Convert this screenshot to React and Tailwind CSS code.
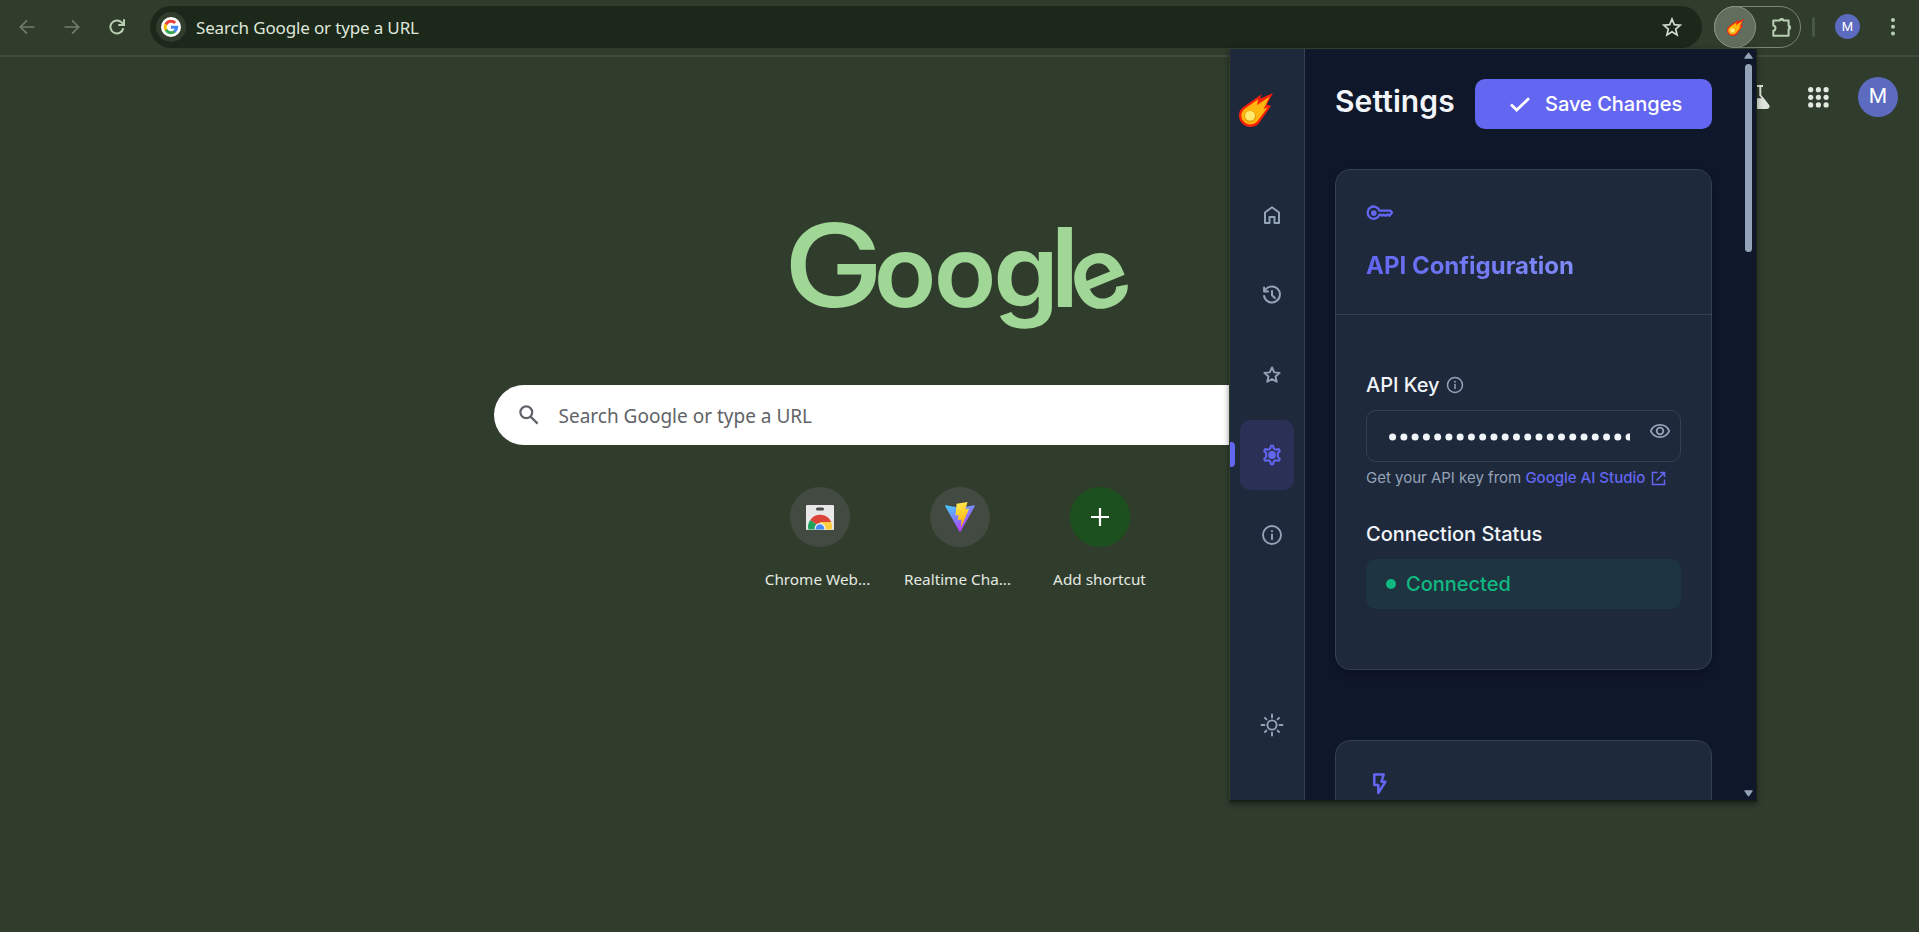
import React from "react";

const uiFont = "font-['Noto_Sans',sans-serif]";

function Stroke({ size = 24, w = 2, className = "", children }) {
  return (
    <svg width={size} height={size} viewBox="0 0 24 24" fill="none" stroke="currentColor" strokeWidth={w} strokeLinecap="round" strokeLinejoin="round" className={`shrink-0 ${className}`}>
      {children}
    </svg>
  );
}

function Comet({ size }) {
  return (
    <svg width={size} height={size} viewBox="0 0 34 34" className="shrink-0">
      <path d="M34 0 27.700 11.600 32 13 21.500 28A11.500 11.500 0 0 1 11.300 33.900 11.300 11.300 0 0 1 0 22.500Q0 17 4.700 13.800L22.700 1.300 21 5.700Z" fill="#f8210a" />
      <path d="M30.500 3.800 22.200 9.300 18 12.300 19.200 6.300 5.900 15.800A9 9 0 0 0 2.300 22.500 9 9 0 0 0 11.300 31.500Q17 31.300 20 26L28.600 14.600 24.500 16.200Z" fill="#ffb70f" />
      <circle cx="11.200" cy="23.500" r="6" fill="#e6a40c" />
      <circle cx="11" cy="22.800" r="4.900" fill="#ffe96e" />
    </svg>
  );
}

function GoogleMark() {
  return (
    <svg width="20" height="20" viewBox="0 0 20 20">
      <circle cx="10" cy="10" r="10" fill="#fff" />
      <g fill="none" strokeWidth="3">
        <path d="M4.850 7.500A5.700 5.700 0 0 1 14.200 6.100" stroke="#ea4335" />
        <path d="M5.100 13A5.700 5.700 0 0 1 4.900 7.200" stroke="#fbbc05" />
        <path d="M13.700 14.400A5.700 5.700 0 0 1 5 12.800" stroke="#34a853" />
        <path d="M10 10.200h5.700a5.700 5.700 0 0 1-2.200 4.300" stroke="#4285f4" />
      </g>
    </svg>
  );
}

function Toolbar() {
  return (
    <header className="flex h-[57px] items-start border-b-2 border-[#434b41] bg-[#303d2d] pt-[6px]">
      <div className="flex h-[42px] w-[150px] items-center gap-[29px] pl-[19px]">
        <svg width="16" height="16" viewBox="0 0 16 16" fill="none" stroke="#6f7c6b" strokeWidth="1.700">
          <path d="M15.500 8H1.500M8 1.300 1.300 8 8 14.700" />
        </svg>
        <svg width="16" height="16" viewBox="0 0 16 16" fill="none" stroke="#6f7c6b" strokeWidth="1.700">
          <path d="M.5 8h14M8 1.300 14.700 8 8 14.700" />
        </svg>
        <svg width="16" height="16" viewBox="0 0 16 16" fill="none" stroke="#b7cfb2" strokeWidth="2">
          <path d="M14.300 9.200A6.500 6.500 0 1 1 12.600 3.400L14.500 5.300M15 .3V6H9.300" />
        </svg>
      </div>
      <div className="flex h-[42px] w-[1552px] items-center rounded-full bg-[#1c281a] pl-[6px] pr-[20px]">
        <div className="flex size-[30px] items-center justify-center rounded-full bg-[#303d2d]">
          <GoogleMark />
        </div>
        <span className={`ml-[10px] mt-px grow text-[17px] tracking-[-0.15px] text-[#dfe6db] ${uiFont}`}>Search Google or type a URL</span>
        <svg width="20" height="20" viewBox="0 0 20 20" fill="none" stroke="#d3dacf" strokeWidth="1.700">
          <path d="m10 2 2.300 5.600 6 .5-4.600 3.900 1.400 5.900L10 14.700l-5.100 3.200L6.300 12 1.700 8.100l6-.5Z" />
        </svg>
      </div>
      <div className="ml-[12px] flex h-[42px] w-[87px] items-center rounded-full border border-[#7b8577]">
        <div className="-ml-px flex size-[42px] shrink-0 items-center justify-center rounded-full border border-[#8a9486] bg-[#616e5d]">
          <Comet size={17} />
        </div>
        <svg width="22" height="22" viewBox="0 0 22 22" className="ml-[15px] shrink-0" fill="none" stroke="#b7cfb2" strokeWidth="2" strokeLinejoin="round">
          <path d="M2.300 4.400h6.500a1.900 1.900 0 0 1 3.600 0h5.200v5.300a1.900 1.900 0 0 1 0 3.700v6.300H2.300v-4.900a2.700 2.700 0 0 0 0-5.300Z" />
          <path d="M9 4a1.700 1.700 0 0 1 3.300 0ZM18 10a1.700 1.700 0 0 1 0 3.200Z" fill="#b7cfb2" strokeWidth="1.500" />
        </svg>
      </div>
      <div className="ml-[11px] mt-[11px] h-[20px] w-[3px] rounded-full bg-[#465843]" />
      <div className="ml-[20px] mt-[8px] flex size-[25px] items-center justify-center rounded-full bg-[#5c6bc0] font-[Roboto] text-[13px] text-white">M</div>
      <svg width="6" height="20" viewBox="0 0 6 20" className="ml-[30px] mt-[11px]" fill="#b7cfb2">
        <circle cx="3" cy="3" r="2" />
        <circle cx="3" cy="9.800" r="2" />
        <circle cx="3" cy="16.500" r="2" />
      </svg>
    </header>
  );
}

const dots = [0, 1, 2, 3, 4, 5, 6, 7, 8];

function AccountRow() {
  return (
    <div className="flex h-[80px] items-center justify-end pr-[21px]">
      <svg width="26" height="24" viewBox="0 0 26 24" fill="#dfe5dc">
        <path d="M7 0h12v2h-1.700v8l7.900 10Q26.500 24 23 24H3Q-.5 24 .8 20L8.700 10V2H7ZM10.700 2v8.500L8.300 13.300h9.400L15.300 10.500V2Z" fillRule="evenodd" />
      </svg>
      <svg width="21" height="21" viewBox="0 0 21 21" className="ml-[38px]" fill="#e3e8e0">
        {dots.map((i) => (
          <circle key={i} cx={2.700 + (i % 3) * 7.700} cy={2.700 + Math.floor(i / 3) * 7.600} r="2.600" />
        ))}
      </svg>
      <div className="ml-[29px] flex size-[40px] items-center justify-center rounded-full bg-[#5c6bc0] font-[Roboto] text-[21px] text-white">M</div>
    </div>
  );
}

function Shortcut({ label, tone, pad = "", children }) {
  return (
    <div className="flex w-[140px] flex-col items-center">
      <div className={`flex size-[60px] items-center justify-center rounded-full ${tone}`}>{children}</div>
      <span className={`mt-[20px] whitespace-nowrap text-[15.300px] leading-[24px] text-[#e4e9e1] ${pad} ${uiFont}`}>{label}</span>
    </div>
  );
}

function NewTab() {
  return (
    <main className="flex flex-col items-center">
      <svg width="380" height="190" viewBox="0 0 380 190" className="mt-[25px]" fontFamily="Inter" fill="#a0d797">
        <text transform="translate(13.500 145) scale(1.165 1)" fontSize="115" fontWeight="500">G</text>
        <text transform="translate(0 145) scale(1.040 1)" fontSize="99" fontWeight="600">
          <tspan x="99.800">o</tspan>
          <tspan x="157.500">o</tspan>
          <tspan x="214.700" fontSize="101">g</tspan>
        </text>
        <text y="145" fontSize="110" fontWeight="600">
          <tspan x="280.500">l</tspan>
          <tspan x="313" y="155" rotate="-22" fontSize="99">e</tspan>
        </text>
      </svg>
      <div className="mt-[33px] flex h-[60px] w-[932px] items-center rounded-full bg-white pl-[25px]">
        <svg width="20" height="20" viewBox="0 0 20 20" fill="none" stroke="#5f6368" strokeWidth="2.200">
          <circle cx="7.300" cy="7.300" r="5.900" />
          <path d="m11.600 11.600 7 7" />
        </svg>
        <span className={`ml-[20px] mt-[2px] text-[19px] text-[#5f6368] ${uiFont}`}>Search Google or type a URL</span>
      </div>
      <div className="mt-[42px] flex">
        <Shortcut label="Chrome Web..." tone="bg-[#434a41]" pad="pr-[4px]">
          <svg width="28" height="25" viewBox="0 0 28 25">
            <rect width="28" height="25" rx="1" fill="#e8e8e8" />
            <rect x="10" y="2.500" width="8" height="3" rx="1.500" fill="#4a4a4a" />
            <path d="M14 22 4.300 15A12 12 0 0 1 25.200 17H14Z" fill="#db4437" />
            <path d="M14 22 4.300 15A12 12 0 0 0 2.300 24.500H12Z" fill="#1fa05c" />
            <path d="M14 17h11.200a12 12 0 0 1 .6 7.500H14Z" fill="#ffcd40" />
            <path d="M8.600 24.500a5.500 5.500 0 1 1 10.800 0Z" fill="#eef2f8" />
            <path d="M9.800 24.500a4.300 4.300 0 1 1 8.400 0Z" fill="#4587f3" />
          </svg>
        </Shortcut>
        <Shortcut label="Realtime Cha..." tone="bg-[#434a41]" pad="pr-[4px]">
          <svg width="30" height="30" viewBox="0 0 30 30">
            <defs>
              <linearGradient id="vBody" x1="0" y1="0" x2=".6" y2="1">
                <stop offset="0" stopColor="#41d1ff" />
                <stop offset="1" stopColor="#bd34fe" />
              </linearGradient>
              <linearGradient id="vBolt" x1=".4" y1="0" x2=".6" y2="1">
                <stop offset="0" stopColor="#ffea4f" />
                <stop offset="1" stopColor="#ffa800" />
              </linearGradient>
            </defs>
            <path d="M.6 3.200 15 5.700 29.400 3.200Q30.200 3.400 29.800 4.200L15.600 29.500Q15 30.200 14.400 29.500L.2 4.200Q0 3.300.6 3.200Z" fill="url(#vBody)" />
            <path d="m11.600 1.800 11-1.800-2.300 7.200 3.900-.6L16 25.500l.5-8-3.700.8.8-5.300-3 .6Z" fill="url(#vBolt)" />
          </svg>
        </Shortcut>
        <Shortcut label="Add shortcut" tone="bg-[#1c501e]">
          <svg width="18" height="18" viewBox="0 0 18 18" stroke="#fff" strokeWidth="2.200">
            <path d="M9 0v18M0 9h18" />
          </svg>
        </Shortcut>
      </div>
    </main>
  );
}

function NavItem({ active, children }) {
  return (
    <div className={`flex h-[70px] w-[54px] items-center justify-center rounded-[10px] pl-[10px] ${active ? "bg-[#2a3056] text-[#6366f1]" : "text-[#94a3b8]"}`}>
      {children}
    </div>
  );
}

function Sidebar() {
  return (
    <aside className="relative flex h-full w-[75px] flex-col border-r border-[#334155] bg-[#1e293b] pl-[10px]">
      <div className="absolute left-0 top-[393px] h-[25px] w-[5px] rounded-r-[4px] bg-[#6366f1]" />
      <div className="mt-[44px] h-[34px] -ml-px">
        <Comet size={34} />
      </div>
      <nav className="mt-[52.500px] flex flex-col gap-[10px]">
        <NavItem>
          <Stroke w={2}><path d="M5 20V9.500L12 4.200l7 5.300V20h-4.500v-6h-5v6Z" /></Stroke>
        </NavItem>
        <NavItem>
          <Stroke w={2}><path d="M4.100 4.500v4h4M4.600 8.200A8 8 0 1 1 4.050 13M12 8v4.200l2.800 2.800" /></Stroke>
        </NavItem>
        <NavItem>
          <Stroke w={1.900}><path d="m12 4.400 2.200 5 5.400.5-4.100 3.600 1.200 5.300L12 16l-4.700 2.800 1.200-5.300-4.100-3.600 5.400-.5Z" /></Stroke>
        </NavItem>
        <NavItem active>
          <Stroke w={2}>
            <path d="M10.300 5.500 10.900 2.800h2.200l.6 2.700 2.300 1.300 2.700-.8 1.200 2-2 2v3.900l2 2-1.200 2-2.700-.8-2.300 1.300-.6 2.800h-2.200l-.6-2.800L8 17.100l-2.700.8-1.200-2 2-2V10l-2-2 1.200-2 2.700.8Z" />
            <circle cx="12" cy="12" r="2.900" fill="currentColor" />
          </Stroke>
        </NavItem>
        <NavItem>
          <Stroke w={1.900}><circle cx="12" cy="12" r="9" /><path d="M12 11.500v4.700" /><path d="M12 8v.1" strokeWidth="2.200" /></Stroke>
        </NavItem>
      </nav>
      <div className="mt-[120px]">
        <NavItem>
          <Stroke w={1.900}>
            <circle cx="12" cy="12" r="4.600" />
            <path d="M12 1.500v3M12 19.500v3M1.500 12h3M19.500 12h3M5 5l1.400 1.400M17.600 17.600 19 19M5 19l1.400-1.400M17.600 6.400 19 5" />
          </Stroke>
        </NavItem>
      </div>
    </aside>
  );
}

function ApiCard() {
  return (
    <section className="h-[501px] w-[377px] shrink-0 rounded-[15px] border border-[#334155] bg-[#1e293b] shadow-[0_4px_8px_rgba(0,0,0,0.25)]">
      <div className="flex h-[145px] flex-col items-start border-b border-[#334155] px-[30px] pt-[29px]">
        <svg width="28" height="28" viewBox="0 0 28 28" fill="none" stroke="#6366f1" strokeWidth="2.300" strokeLinejoin="round" strokeLinecap="round">
          <path d="M13.500 11.700h11l1.500 2-2.600 3-2-1.200-1.700 1.400-1.900-1.300-1.600 1.100-1.500-1.100h-1.200a6.100 6.100 0 1 1 0-3.900Z" />
          <circle cx="7.800" cy="14" r="1.700" fill="#6366f1" />
        </svg>
        <h2 className="mt-[22px] bg-linear-to-r from-[#6366f1] to-[#818cf8] bg-clip-text text-[24px] font-bold leading-[34px] text-transparent">API Configuration</h2>
      </div>
      <div className="flex flex-col px-[30px] pt-[57px]">
        <div className="flex h-[26px] items-center">
          <label className="text-[20px] font-medium leading-[26px] text-[#f1f5f9]">API Key</label>
          <Stroke size={20} w={1.800} className="ml-[5px] text-[#94a3b8]"><circle cx="12" cy="12" r="9" /><path d="M12 11.500v4.700" /><path d="M12 8v.1" strokeWidth="2.200" /></Stroke>
        </div>
        <div className="mt-[12px] flex h-[52px] items-start rounded-[10px] border border-[#334155] pl-[22px] pt-[9px]">
          <svg width="241" height="10" viewBox="0 0 241 10" className="mt-[12px] shrink-0" fill="#f1f5f9">
            {Array.from({ length: 22 }, (_, i) => (
              <circle key={i} cx={3.600 + i * 11.260} cy="5" r="3.500" />
            ))}
          </svg>
          <Stroke size={22} w={2} className="ml-[19px] text-[#94a3b8]">
            <path d="M2 12C3.700 7.800 7.500 5.400 12 5.400S20.300 7.800 22 12c-1.700 4.200-5.500 6.600-10 6.600S3.700 16.200 2 12Z" />
            <circle cx="12" cy="12" r="3.600" />
          </Stroke>
        </div>
        <p className="mt-[5px] flex items-center text-[15px] leading-[22px] text-[#94a3b8]">
          Get your API key from&nbsp;<a className="font-medium text-[#6366f1]">Google AI Studio</a>
          <svg width="15" height="15" viewBox="0 0 15 15" fill="none" stroke="#6366f1" strokeWidth="1.500" className="ml-[6px]">
            <path d="M6.500 1.500h-5v12h12v-5M9 1.500h4.500V6M13.300 1.700 5.500 9.500" />
          </svg>
        </p>
        <h3 className="mt-[32px] text-[20px] font-medium leading-[26px] text-[#f1f5f9]">Connection Status</h3>
        <div className="mt-[12px] flex h-[50px] items-center rounded-[10px] bg-[#1e3541] pl-[20px] text-[20px] font-medium text-[#10b981]">
          <span className="mr-[10px] size-[10px] rounded-full bg-[#10b981]" />
          Connected
        </div>
      </div>
    </section>
  );
}

function Popup() {
  return (
    <div className="absolute left-[1229px] top-[48px] flex h-[754px] w-[528px] border border-b-2 border-[#303d2d] border-b-[#1a2119] border-r-[#1a2119] bg-[#0f172a] font-[Inter] shadow-[0_2px_6px_rgba(0,0,0,0.45)]">
      <Sidebar />
      <div className="flex h-full min-w-0 grow overflow-hidden pl-[30px]">
        <div className="flex w-[377px] shrink-0 flex-col">
          <div className="mt-[30px] flex h-[50px] shrink-0 items-center justify-between">
            <h1 className="-mt-[6px] text-[30px] font-semibold leading-[40px] tracking-[0.1px] text-[#f1f5f9]">Settings</h1>
            <button className="flex h-[50px] w-[237px] items-center rounded-[10px] bg-[#6366f1] pl-[33px] text-[20px] font-medium text-white">
              <Stroke size={24} w={2.800}><path d="m3 12.500 5.700 5.500L21 6.200" strokeLinecap="butt" strokeLinejoin="miter" /></Stroke>
              <span className="ml-[13px]">Save Changes</span>
            </button>
          </div>
          <div className="mt-[40px] flex flex-col gap-[70px]">
            <ApiCard />
            <section className="h-[160px] w-[377px] rounded-[15px] border border-[#334155] bg-[#1e293b] px-[30px] pt-[29px]">
              <svg width="28" height="28" viewBox="0 0 28 28" fill="none" stroke="#6366f1" strokeWidth="2.500" strokeLinejoin="round">
                <path d="M8.300 4.500h9.400l-2.200 7.200h4L12.300 23v-8h-4Z" />
              </svg>
            </section>
          </div>
        </div>
        <div className="ml-[32px] flex flex-col items-center justify-between py-[3px]">
          <div className="flex flex-col items-center">
            <svg width="9" height="7" viewBox="0 0 9 7" className="mb-[5px]" fill="#94a3b8"><path d="M4.500.5Q5 .5 8.700 6v.700H.3V6Q4 .5 4.500.5Z" /></svg>
            <div className="h-[188px] w-[7px] rounded-full bg-[#94a3b8]" />
          </div>
          <svg width="9" height="7" viewBox="0 0 9 7" fill="#94a3b8"><path d="M4.500 6.500Q5 6.500 8.700 1V.300H.3V1Q4 6.500 4.500 6.500Z" /></svg>
        </div>
      </div>
    </div>
  );
}

export default function App() {
  return (
    <div className="relative h-[932px] w-[1919px] overflow-hidden bg-[#303d2d]">
      <Toolbar />
      <AccountRow />
      <NewTab />
      <Popup />
    </div>
  );
}
